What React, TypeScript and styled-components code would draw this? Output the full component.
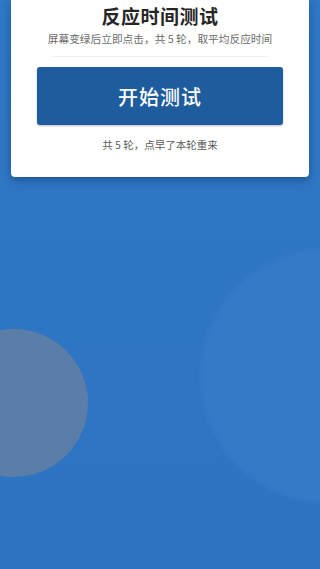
import React from 'react';
import styled, { createGlobalStyle } from 'styled-components';

const GlobalStyle = createGlobalStyle`
  html, body {
    margin: 0;
    padding: 0;
    height: 100%;
    background: #2e75c3;
    font-family: "Noto Sans CJK SC", "Noto Sans", sans-serif;
  }
  #root {
    height: 100%;
  }
`;

const Screen = styled.div`
  position: relative;
  width: 320px;
  height: 569px;
  overflow: hidden;
  background: linear-gradient(180deg, #2f78c6 0%, #2e75c3 60%, #2d73c1 100%);
`;

const Bubble = styled.div<{ $size: number; $color: string; $blur?: number }>`
  position: absolute;
  width: ${(p) => p.$size}px;
  height: ${(p) => p.$size}px;
  border-radius: 50%;
  background: ${(p) => p.$color};
  filter: blur(${(p) => p.$blur ?? 0}px);
`;

const Card = styled.div`
  position: relative;
  z-index: 1;
  margin: 0 11px;
  padding: 2px 26px 25px;
  background: #fff;
  border-radius: 0 0 4px 4px;
  box-shadow: 0 3px 8px rgba(10, 40, 80, 0.45);
  display: flex;
  flex-direction: column;
  align-items: stretch;
  text-align: center;
`;

const Title = styled.h1`
  margin: 0;
  font-size: 19px;
  line-height: 28px;
  font-weight: 700;
  color: #262626;
  letter-spacing: 0.5px;
`;

const Subtitle = styled.p`
  margin: 1px -4px 0;
  font-size: 10.7px;
  line-height: 15px;
  color: #6b6b6b;
`;

const Divider = styled.hr`
  margin: 10px 14px 10px;
  border: none;
  border-top: 1px solid #efefef;
`;

const StartButton = styled.button`
  height: 58px;
  border: none;
  border-radius: 3px;
  background: #1e5c9d;
  box-shadow: 0 1px 2px rgba(0, 0, 0, 0.25);
  color: #fff;
  font-family: inherit;
  font-size: 20px;
  font-weight: 500;
  letter-spacing: 1px;
  cursor: pointer;
`;

const Hint = styled.p`
  margin: 12px 0 0;
  font-size: 10.5px;
  line-height: 15px;
  color: #5c5c5c;
`;

export default function App() {
  return (
    <>
      <GlobalStyle />
      <Screen>
        <Bubble $size={148} $color="#5a7ea7" style={{ left: -60, top: 329 }} />
        <Bubble $size={254} $color="#347ac7" $blur={2} style={{ left: 200, top: 249 }} />
        <Card>
          <Title>反应时间测试</Title>
          <Subtitle>屏幕变绿后立即点击，共 5 轮，取平均反应时间</Subtitle>
          <Divider />
          <StartButton>开始测试</StartButton>
          <Hint>共 5 轮，点早了本轮重来</Hint>
        </Card>
      </Screen>
    </>
  );
}
